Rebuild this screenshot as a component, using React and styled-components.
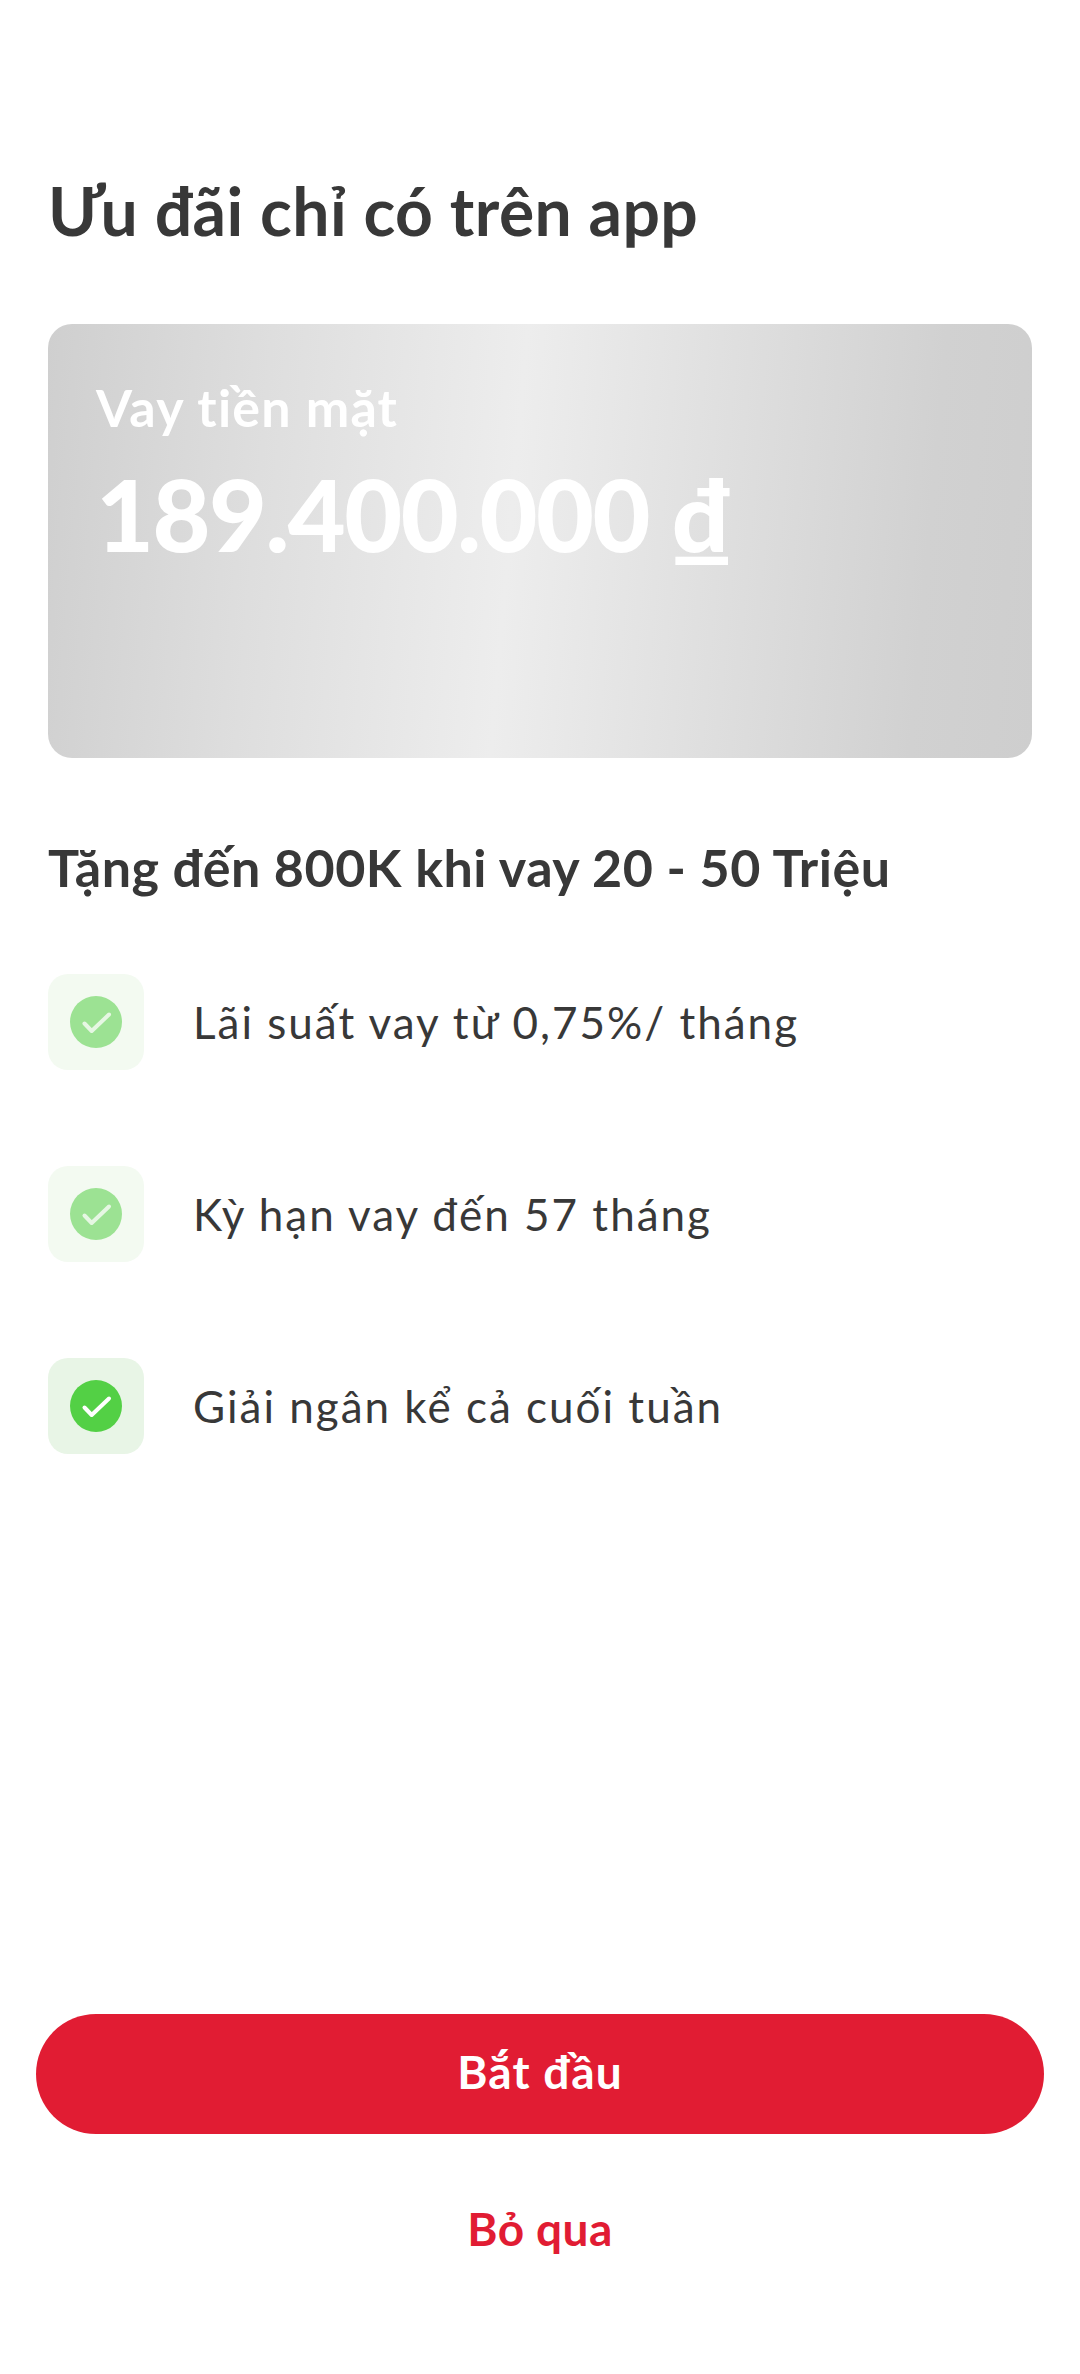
import React from 'react'
import styled, { createGlobalStyle } from 'styled-components'

const GlobalStyle = createGlobalStyle`
  html, body {
    margin: 0;
    padding: 0;
    background: #fff;
  }
`

const Page = styled.div`
  width: 1080px;
  height: 2374px;
  box-sizing: border-box;
  display: flex;
  flex-direction: column;
  font-family: "Lato", "Noto Sans", sans-serif;
  color: #383838;
  background: #fff;
`

const Content = styled.div`
  flex: 1;
  padding: 166px 48px 0;
`

const Title = styled.h1`
  margin: 0 0 68px;
  height: 90px;
  line-height: 90px;
  font-size: 66px;
  font-weight: 700;
  letter-spacing: 0.4px;
`

const Card = styled.div`
  height: 434px;
  box-sizing: border-box;
  padding: 51px 48px 0;
  border-radius: 24px;
  color: #fff;
  background: linear-gradient(95deg, #cfcfcf 0%, #dedede 22%, #ededed 47%, #e0e0e0 66%, #d1d1d1 88%, #cecece 100%);
`

const CardLabel = styled.div`
  height: 64px;
  line-height: 64px;
  font-size: 52px;
  font-weight: 700;
  letter-spacing: 1.2px;
`

const Amount = styled.div`
  margin-top: 19px;
  height: 110px;
  line-height: 110px;
  font-size: 100px;
  font-weight: 900;
  letter-spacing: -1.5px;
`

const Subtitle = styled.h2`
  margin: 76px 0 74px;
  height: 66px;
  line-height: 66px;
  font-size: 52px;
  font-weight: 700;
  letter-spacing: 0.5px;
`

const FeatureList = styled.div`
  display: flex;
  flex-direction: column;
  gap: 96px;
`

const Feature = styled.div`
  display: flex;
  align-items: center;
  gap: 49px;
`

const CheckBox = styled.div`
  width: 96px;
  height: 96px;
  border-radius: 20px;
  display: flex;
  align-items: center;
  justify-content: center;
  background: ${(p) => (p.$faded ? '#f3faf1' : '#e8f5e6')};
`

const FeatureText = styled.span`
  font-size: 44px;
  letter-spacing: 2px;
`

const Actions = styled.div`
  padding: 0 36px 104px;
  display: flex;
  flex-direction: column;
  align-items: center;
`

const PrimaryButton = styled.button`
  width: 100%;
  height: 120px;
  border: 0;
  border-radius: 60px;
  padding: 0 0 6px;
  background: #e11c33;
  color: #fff;
  font-family: inherit;
  font-size: 46px;
  font-weight: 700;
  letter-spacing: 1.2px;
`

const SkipButton = styled.button`
  margin-top: 52px;
  height: 84px;
  border: 0;
  background: none;
  color: #e11c33;
  font-family: inherit;
  font-size: 46px;
  font-weight: 700;
  letter-spacing: 0.4px;
`

const CheckIcon = ({ faded }) => (
  <svg width="52" height="52" viewBox="0 0 52 52">
    <circle cx="26" cy="26" r="26" fill={faded ? '#9ce293' : '#53d045'} />
    <path
      d="M14.5 27.5 L21.7 35 L39 18.5"
      fill="none"
      stroke={faded ? '#e6f7e3' : '#fff'}
      strokeWidth="4"
      strokeLinecap="round"
      strokeLinejoin="round"
    />
  </svg>
)

const features = [
  { text: 'Lãi suất vay từ 0,75%/ tháng', faded: true },
  { text: 'Kỳ hạn vay đến 57 tháng', faded: true },
  { text: 'Giải ngân kể cả cuối tuần', faded: false },
]

const App = () => {
  return (
    <Page>
      <GlobalStyle />
      <Content>
        <Title>Ưu đãi chỉ có trên app</Title>
        <Card>
          <CardLabel>Vay tiền mặt</CardLabel>
          <Amount>189.400.000 ₫</Amount>
        </Card>
        <Subtitle>Tặng đến 800K khi vay 20 - 50 Triệu</Subtitle>
        <FeatureList>
          {features.map((f) => (
            <Feature key={f.text}>
              <CheckBox $faded={f.faded}>
                <CheckIcon faded={f.faded} />
              </CheckBox>
              <FeatureText>{f.text}</FeatureText>
            </Feature>
          ))}
        </FeatureList>
      </Content>
      <Actions>
        <PrimaryButton>Bắt đầu</PrimaryButton>
        <SkipButton>Bỏ qua</SkipButton>
      </Actions>
    </Page>
  )
}

export default App
